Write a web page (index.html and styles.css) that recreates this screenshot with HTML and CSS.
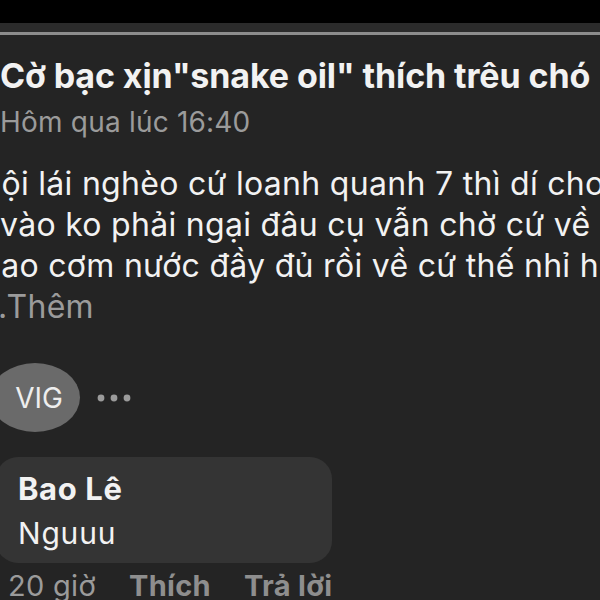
FILE: index.html
```html
<!DOCTYPE html>
<html lang="vi">
<head>
  <meta charset="UTF-8" />
  <meta name="viewport" content="width=device-width, initial-scale=1.0"/>
  <title>Bài viết</title>
  <link rel="stylesheet" href="styles.css">
</head>
<body>
  <div class="status-bar"></div>
  <div class="top-bar"></div>

  <main class="post">
    <h1 class="post-title">Cờ bạc xịn"snake oil" thích trêu chó</h1>
    <div class="post-time">Hôm qua lúc 16:40</div>

    <div class="post-body">
      <div class="line line-first">Đội lái nghèo cứ loanh quanh 7 thì dí cho</div>
      <div class="line">vào ko phải ngại đâu cụ vẫn chờ cứ về</div>
      <div class="line line-third">Bao cơm nước đầy đủ rồi về cứ thế nhỉ hehe</div>
      <div class="line line-more">...Thêm</div>
    </div>

    <div class="reactions">
      <div class="avatar">VIG</div>
      <svg class="more" width="34" height="8" viewBox="0 0 34 8">
        <circle cx="4" cy="4" r="3.4"/>
        <circle cx="17" cy="4" r="3.4"/>
        <circle cx="30" cy="4" r="3.4"/>
      </svg>
    </div>

    <div class="comment">
      <div class="comment-name">Bao Lê</div>
      <div class="comment-text">Nguuu</div>
    </div>

    <div class="comment-actions">
      <span class="comment-age">20 giờ</span>
      <span class="action">Thích</span>
      <span class="action">Trả lời</span>
    </div>
  </main>
</body>
</html>
```

FILE: styles.css
```css
:root {
  --bg-color: #242424;
  --bar-color: #2b2b2b;
  --line-color: #8c8c8c;
  --text-color: #f2f2f2;
  --muted: #9b9b9b;
  --bubble-bg: #343434;
  --avatar-bg: #6a6a6a;
}

html, body {
  margin: 0;
  height: 100%;
}

body {
  background: var(--bg-color);
  color: var(--text-color);
  font-family: 'Inter', 'Liberation Sans', sans-serif;
  overflow: hidden;
}

.status-bar {
  height: 23px;
  background: #000;
}

.top-bar {
  height: 9px;
  background: var(--bar-color);
  border-bottom: 3px solid var(--line-color);
}

.post-title {
  margin: 21px 0 0;
  font-size: 34px;
  line-height: 40px;
  font-weight: 700;
  white-space: nowrap;
  letter-spacing: -0.1px;
}

.post-time {
  margin-top: 10px;
  font-size: 28px;
  line-height: 32px;
  letter-spacing: 0.2px;
  color: var(--muted);
}

.post-body {
  margin-top: 25px;
  font-size: 32px;
  line-height: 41px;
  letter-spacing: 0.3px;
  overflow: hidden;
}

.line {
  white-space: nowrap;
}

.line-first {
  margin-left: -22px;
}

.line-third {
  margin-left: -20px;
}

.line-more {
  margin-left: -21px;
  color: var(--muted);
}

.reactions {
  display: flex;
  align-items: center;
  gap: 17px;
  margin-top: 36px;
}

.avatar {
  width: 90px;
  height: 69px;
  margin-left: -10px;
  padding-left: 8px;
  box-sizing: border-box;
  border-radius: 50%;
  background: var(--avatar-bg);
  display: flex;
  align-items: center;
  justify-content: center;
  font-size: 28px;
  color: #eeeeee;
}

.more {
  fill: var(--muted);
}

.comment {
  margin: 25px 0 0 -4px;
  width: 336px;
  box-sizing: border-box;
  padding: 12px 22px 10px;
  background: var(--bubble-bg);
  border-radius: 22px;
}

.comment-name {
  font-size: 31px;
  line-height: 40px;
  font-weight: 700;
  letter-spacing: 0.6px;
}

.comment-text {
  margin-top: 4px;
  font-size: 30px;
  line-height: 40px;
  letter-spacing: 0.8px;
}

.comment-actions {
  display: flex;
  gap: 33px;
  margin-top: 6px;
  padding-left: 8px;
  font-size: 29px;
  line-height: 34px;
  letter-spacing: 0.3px;
  color: var(--muted);
}

.action {
  font-weight: 700;
  color: #8e8e8e;
}
```
